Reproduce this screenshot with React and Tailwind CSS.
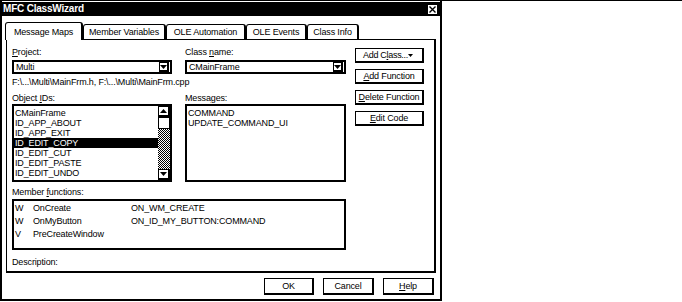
import React from 'react';

const objectIds = ['CMainFrame', 'ID_APP_ABOUT', 'ID_APP_EXIT', 'ID_EDIT_COPY', 'ID_EDIT_CUT', 'ID_EDIT_PASTE', 'ID_EDIT_UNDO'];
const messages = ['COMMAND', 'UPDATE_COMMAND_UI'];
const members = [
    { kind: 'W', name: 'OnCreate', map: 'ON_WM_CREATE' },
    { kind: 'W', name: 'OnMyButton', map: 'ON_ID_MY_BUTTON:COMMAND' },
    { kind: 'V', name: 'PreCreateWindow', map: '' }
];
const tabs = [
    { label: 'Message Maps', w: 'w-[78px]', active: true },
    { label: 'Member Variables', w: 'w-[83px]' },
    { label: 'OLE Automation', w: 'w-[80px]' },
    { label: 'OLE Events', w: 'w-[61px]' },
    { label: 'Class Info', w: 'w-[52px]' }
];

const Arrow = ({ up, small }) => (
    <svg width={small ? 5 : 7} height={small ? 3 : 4} viewBox="0 0 7 4" className="block shrink-0">
        <polygon points={up ? '0,4 7,4 3.5,0' : '0,0 7,0 3.5,4'} fill="#000" />
    </svg>
);

const Combo = ({ value }) => (
    <div className="mt-[3px] h-[14px] border-2 border-black bg-white flex items-center">
        <span className="flex-1 pl-[2px] leading-[10px]">{value}</span>
        <div className="w-[10px] h-[10px] mr-px border border-black border-r-2 border-b-2 flex items-center justify-center">
            <Arrow />
        </div>
    </div>
);

const Button = ({ children, className = '' }) => (
    <div className={`border border-black border-r-2 border-b-2 bg-white flex items-center justify-center leading-[10px] whitespace-nowrap ${className}`}>
        {children}
    </div>
);

const Label = ({ children, className = '' }) => (
    <div className={`h-[10px] leading-[10px] whitespace-nowrap ${className}`}>{children}</div>
);

export default function App() {
    return (
        <div className="w-[682px] h-[302px] bg-white border-t border-black flex font-['Liberation_Sans',Arial,sans-serif] text-[9px] tracking-[-0.15px] text-black">
            <div className="w-[442px] h-[300px] border-x-2 border-b-2 border-black pt-px flex flex-col">
                {/* title bar */}
                <div className="h-[14px] bg-black flex items-center justify-between pl-[1px] pr-[2px]">
                    <span className="text-white font-bold text-[10px] tracking-[-0.2px] leading-none">MFC ClassWizard</span>
                    <div className="w-[11px] h-[11px] bg-white border border-black flex items-center justify-center">
                        <svg width="7" height="7" viewBox="0 0 7 7">
                            <path d="M0.5 0.5 L6.5 6.5 M6.5 0.5 L0.5 6.5" stroke="#000" strokeWidth="1.4" />
                        </svg>
                    </div>
                </div>

                {/* tabs */}
                <div className="mt-[6px] ml-[3px] h-[18px] -mb-px flex items-end relative z-10">
                    {tabs.map((t) => (
                        <div
                            key={t.label}
                            className={`${t.w} border-t border-l border-r-2 border-black rounded-t-[3px] bg-white flex items-center justify-center leading-[10px] ${t.active ? 'h-[18px]' : 'h-[15px] mb-px'}`}
                        >
                            {t.label}
                        </div>
                    ))}
                </div>

                {/* panel */}
                <div className="ml-[4px] w-[430px] h-[234px] border-l border-t border-r-2 border-b-2 border-black flex pl-[5px]">
                    <div className="w-[334px] flex flex-col">
                        <div className="mt-[7px] flex">
                            <div className="w-[160px]">
                                <Label><u>P</u>roject:</Label>
                                <Combo value="Multi" />
                            </div>
                            <div className="w-[161px] ml-[13px]">
                                <Label>Class <u>n</u>ame:</Label>
                                <Combo value="CMainFrame" />
                            </div>
                        </div>

                        <Label className="mt-[3px]">F:\...\Multi\MainFrm.h, F:\...\Multi\MainFrm.cpp</Label>

                        <div className="mt-[6px] flex">
                            <div className="w-[160px]">
                                <Label>Object <u>I</u>Ds:</Label>
                                <div className="mt-px h-[78px] border-2 border-black flex">
                                    <div className="flex-1 pt-[2px]">
                                        {objectIds.map((id) => (
                                            <div
                                                key={id}
                                                className={`h-[10px] leading-[10px] pl-px ${id === 'ID_EDIT_COPY' ? 'bg-black text-white' : ''}`}
                                            >
                                                {id}
                                            </div>
                                        ))}
                                    </div>
                                    <div className="w-[12px] flex flex-col">
                                        <div className="h-[11px] border border-black border-r-2 border-b-2 flex items-center justify-center">
                                            <Arrow up />
                                        </div>
                                        <div className="h-[12px] border border-black bg-white" />
                                        <div className="flex-1 bg-[repeating-conic-gradient(#000_0%_25%,#fff_0%_50%)] bg-[length:2px_2px]" />
                                        <div className="h-[11px] border border-black border-r-2 border-b-2 flex items-center justify-center">
                                            <Arrow />
                                        </div>
                                    </div>
                                </div>
                            </div>
                            <div className="w-[161px] ml-[13px]">
                                <Label>Messa<u>g</u>es:</Label>
                                <div className="mt-px h-[78px] border-2 border-black pt-[2px]">
                                    {messages.map((m) => (
                                        <div key={m} className="h-[10px] leading-[10px] pl-px">{m}</div>
                                    ))}
                                </div>
                            </div>
                        </div>

                        <Label className="mt-[5px]">Member <u>f</u>unctions:</Label>
                        <div className="mt-[2px] h-[51px] border-2 border-black">
                            {members.map((m) => (
                                <div key={m.name} className="h-[13px] flex items-center leading-[10px] pl-px">
                                    <span className="w-[18px]">{m.kind}</span>
                                    <span className="w-[98px]">{m.name}</span>
                                    <span>{m.map}</span>
                                </div>
                            ))}
                        </div>

                        <Label className="mt-[7px]">Description:</Label>
                    </div>

                    <div className="ml-[9px] mt-[8px] w-[69px] flex flex-col gap-[6px]">
                        <Button className="h-[15px] justify-between pl-[4px] pr-[6px]">
                            <span className="tracking-[-0.3px]">Add C<u>l</u>ass...</span>
                            <Arrow small />
                        </Button>
                        <Button className="h-[15px]"><span><u>A</u>dd Function</span></Button>
                        <Button className="h-[15px]"><span><u>D</u>elete Function</span></Button>
                        <Button className="h-[15px]"><span><u>E</u>dit Code</span></Button>
                    </div>
                </div>

                {/* bottom buttons */}
                <div className="mt-[5px] pr-[6px] flex justify-end gap-[9px]">
                    <Button className="w-[50px] h-[17px]">OK</Button>
                    <Button className="w-[51px] h-[17px]">Cancel</Button>
                    <Button className="w-[51px] h-[17px]"><span><u>H</u>elp</span></Button>
                </div>
            </div>
            <div className="flex-1" />
        </div>
    );
}
